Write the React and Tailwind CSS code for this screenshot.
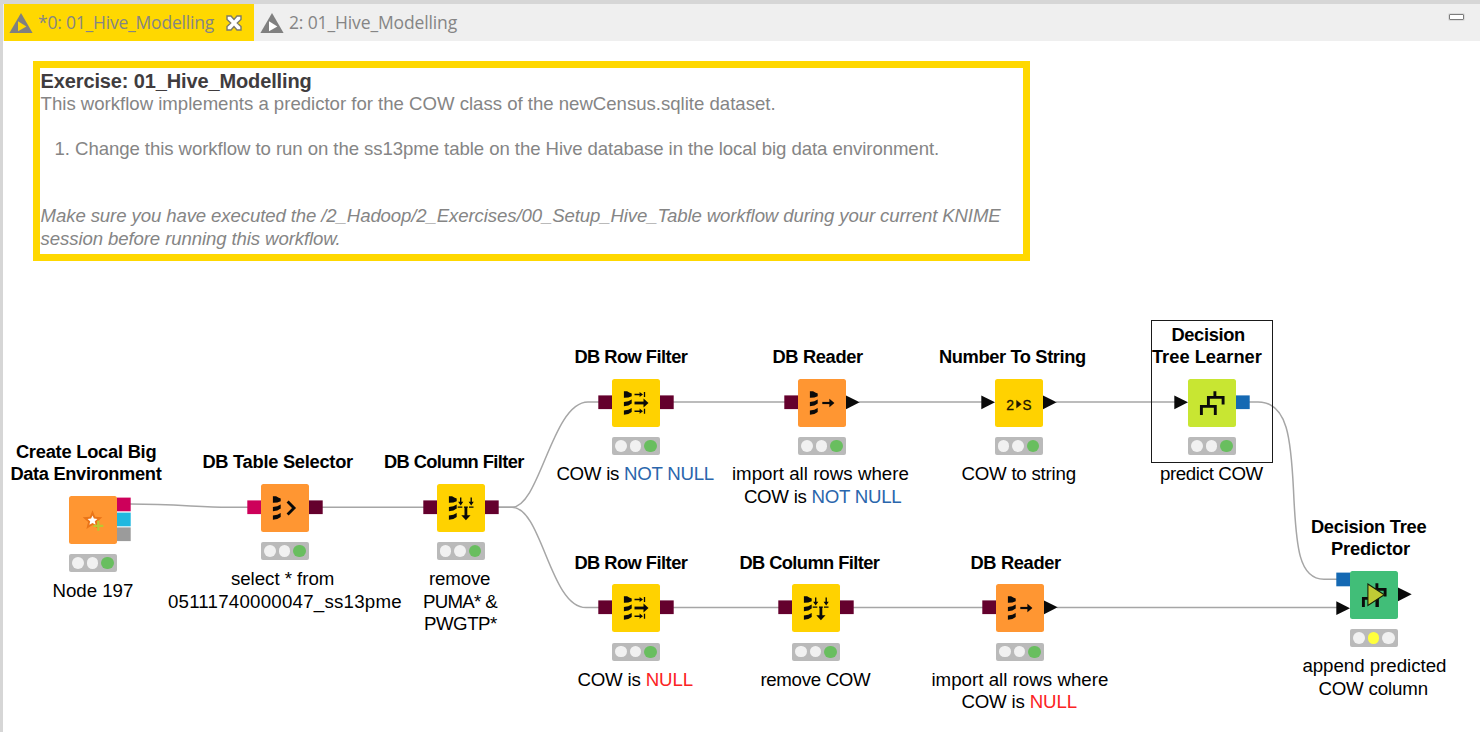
import React, { useLayoutEffect, useRef, useState } from "react";

// One line of text whose tracking is adjusted so that it spans `width` pixels.
function FitText({ width, className = "", children }) {
  const ref = useRef(null);
  const [spacing, setSpacing] = useState(0);
  useLayoutEffect(() => {
    const el = ref.current;
    el.style.letterSpacing = "0px";
    const natural = el.getBoundingClientRect().width;
    const next = (width - natural) / el.textContent.length;
    el.style.letterSpacing = next + "px";
    setSpacing(next);
  }, [width]);
  return (
    <span ref={ref} className={"inline-block whitespace-pre " + className} style={{ letterSpacing: spacing + "px" }}>
      {children}
    </span>
  );
}

// Lines are [x1, x2, text, highlighted text, highlight colour class].
function Label({ lines, top, bold }) {
  const left = Math.min(...lines.map((l) => l[0]));
  return (
    <div className="absolute flex flex-col items-start" style={{ left: left - 0.6, top }}>
      {lines.map(([x1, x2, text, mark, color], i) => (
        <div
          key={i}
          className={"h-[22.4px] leading-[22.4px] text-black " + (bold ? "text-[18.3px] font-bold" : "text-[18.7px]")}
          style={{ marginLeft: x1 - left }}
        >
          <FitText width={x2 - x1 + 1}>
            {text}
            {mark && <span className={color}>{mark}</span>}
          </FitText>
        </div>
      ))}
    </div>
  );
}

const Stack = () => (
  <g fill="#0a0a0a">
    <path d="M11.9 12.2h3.2q2 1.5 4.6 2.2v2.8q-3.200 1.700-7.800 1.600z" />
    <path d="M11.900 22.900q5-.4 7.800-2.500v4.200q-2.800 2.500-7.800 2.600z" />
    <path d="M11.900 31.400q5-.4 7.800-2.500v4.200q-2.800 2.500-7.800 2.600z" />
  </g>
);

const Tree = () => (
  <path d="M26.9 12.3V18.4M20.4 28.5V18.4H35.1V25.6M13.4 36V27.4H27.3V36" fill="none" stroke="#0a0a0a" strokeWidth="2.900" />
);

const icons = {
  star: (
    <g>
      <path d="M23.5 14.2l2.6 6.5 7.2.5-5.4 4.7 1.7 7-6.1-3.8-6.100 3.800 1.700-7-5.400-4.700 7.200-.5z" fill="#ea7519" />
      <path d="M23.500 19.400l1.400 3.200 3.500.4-2.600 2.300.8 3.500-3.100-1.800-3.100 1.800.8-3.500-2.600-2.300 3.500-.4z" fill="#fff" />
      <path d="M24.3 29.8H34.3M29.3 24.8V34.8" stroke="#bcc832" strokeWidth="2.2" />
    </g>
  ),
  selector: (
    <g>
      <Stack />
      <path d="M26.6 17.6L33 24.1L26.6 30.6" fill="none" stroke="#0a0a0a" strokeWidth="2.900" />
    </g>
  ),
  row: (
    <g>
      <Stack />
      <g stroke="#0a0a0a" fill="#0a0a0a">
        <path d="M22.500 15.500H29M22.500 32.200H29" strokeWidth="1.400" />
        <path d="M27.600 12.900l3.400 2.600-3.400 2.600zM27.600 29.600l3.400 2.600-3.400 2.600z" stroke="none" />
        <path d="M32.500 13V18M32.500 29.700V34.700" strokeWidth="1.300" />
        <path d="M22.500 24H33" strokeWidth="2.800" />
        <path d="M31.500 19.400l5 4.600-5 4.600z" stroke="none" />
      </g>
    </g>
  ),
  column: (
    <g>
      <Stack />
      <g stroke="#0a0a0a" fill="#0a0a0a">
        <path d="M23.700 13.500V19M34.200 13.500V19" strokeWidth="1.400" />
        <path d="M21.100 17.800l2.600 3.600 2.600-3.600zM31.600 17.800l2.600 3.600 2.600-3.600z" stroke="none" />
        <path d="M20.700 23.200H25.300M27 23.200H30.800M32 23.200H36.500" strokeWidth="1.200" />
        <path d="M28.900 23V33" strokeWidth="2.800" />
        <path d="M24.300 31.300l4.600 5 4.600-5z" stroke="none" />
      </g>
    </g>
  ),
  reader: (
    <g>
      <Stack />
      <path d="M24.300 24H33" stroke="#0a0a0a" strokeWidth="2.200" />
      <path d="M31.400 19.700l5 4.300-5 4.300z" fill="#0a0a0a" />
    </g>
  ),
  string: (
    <g fill="#1c1600" fontFamily="Liberation Sans, sans-serif" fontSize="15" stroke="#1c1600" strokeWidth=".3">
      <text x="11.200" y="30.600" textLength="7.800" lengthAdjust="spacingAndGlyphs">2</text>
      <path d="M21.500 21.300L26.400 25.200L21.500 29.100z" />
      <text x="27.500" y="30.600" textLength="9" lengthAdjust="spacingAndGlyphs">S</text>
    </g>
  ),
  tree: <Tree />,
  predictor: (
    <g>
      <Tree />
      <path d="M27 27V36" stroke="#0a0a0a" strokeWidth="2.900" />
      <path d="M17.900 13L34.300 23.800L17.900 34.400z" fill="#bfcb35" stroke="#14200a" strokeWidth="1.100" />
    </g>
  ),
};

const M = "#64002d";
const P = "#cd005a";
const B = "#1569b3";
const BLUE = "text-[#2a66ac]";
const RED = "text-[#fb2323]";

// Ports are [side, offset from the body's top, colour]; without a colour they are data triangles.
const nodes = [
  {
    x: 69, y: 495.7, bg: "bg-[#ff9632]", icon: "star",
    ports: [["r", 1.6, P], ["r", 16.6, "#1fb8e0"], ["r", 31.4, "#9b9b9b"]],
    title: [[16.5, 156, "Create Local Big"], [11, 161, "Data Environment"]],
    note: [[53, 133, "Node 197"]],
  },
  {
    x: 261, y: 483.7, bg: "bg-[#ff9632]", icon: "selector",
    ports: [["l", 16.4, P], ["r", 16.4, M]],
    title: [[203, 352.5, "DB Table Selector"]],
    note: [[231.5, 334, "select * from"], [168.5, 401.5, "05111740000047_ss13pme"]],
  },
  {
    x: 436.5, y: 483.7, bg: "bg-[#ffd200]", icon: "column",
    ports: [["l", 16.4, M], ["r", 16.4, M]],
    title: [[384.5, 523.5, "DB Column Filter"]],
    note: [[429.5, 490, "remove"], [423.5, 496.5, "PUMA* &"], [424.5, 496.5, "PWGTP*"]],
  },
  {
    x: 612, y: 378.7, bg: "bg-[#ffd200]", icon: "row",
    ports: [["l", 16.4, M], ["r", 16.4, M]],
    title: [[575, 687, "DB Row Filter"]],
    note: [[557, 713.5, "COW is ", "NOT NULL", BLUE]],
  },
  {
    x: 798, y: 378.7, bg: "bg-[#ff9632]", icon: "reader",
    ports: [["l", 16.4, M], ["r", 16.4]],
    title: [[773, 862.5, "DB Reader"]],
    note: [[732.5, 908.5, "import all rows where"], [744.5, 901, "COW is ", "NOT NULL", BLUE]],
  },
  {
    x: 994.5, y: 378.7, bg: "bg-[#ffd200]", icon: "string",
    ports: [["l", 16.4], ["r", 16.4]],
    title: [[939.5, 1085.5, "Number To String"]],
    note: [[962, 1075.5, "COW to string"]],
  },
  {
    x: 1188, y: 378.7, bg: "bg-[#c8e632]", icon: "tree",
    ports: [["l", 16.4], ["r", 16.4, B]],
    title: [[1172, 1244.5, "Decision"], [1152.5, 1261.5, "Tree Learner"]],
    note: [[1160.5, 1262.5, "predict COW"]],
  },
  {
    x: 612, y: 584.3, bg: "bg-[#ffd200]", icon: "row",
    ports: [["l", 16.4, M], ["r", 16.4, M]],
    title: [[575, 687, "DB Row Filter"]],
    note: [[578, 692.5, "COW is ", "NULL", RED]],
  },
  {
    x: 792, y: 584.3, bg: "bg-[#ffd200]", icon: "column",
    ports: [["l", 16.4, M], ["r", 16.4, M]],
    title: [[740, 879, "DB Column Filter"]],
    note: [[761, 870, "remove COW"]],
  },
  {
    x: 996, y: 584.3, bg: "bg-[#ff9632]", icon: "reader",
    ports: [["l", 16.4, M], ["r", 16.4]],
    title: [[971, 1060.5, "DB Reader"]],
    note: [[932, 1108, "import all rows where"], [962, 1076.5, "COW is ", "NULL", RED]],
  },
  {
    x: 1350, y: 570.7, bg: "bg-[#41be78]", icon: "predictor", state: "configured",
    ports: [["l", 1.6, B], ["l", 30.3], ["r", 16.4]],
    title: [[1311.5, 1426, "Decision Tree"], [1331.5, 1409.5, "Predictor"]],
    note: [[1303, 1446, "append predicted"], [1319, 1427.5, "COW column"]],
  },
];

function Node({ node }) {
  const { x, y, bg, icon, ports, title, note, state } = node;
  return (
    <>
      <Label lines={title} bold top={y - 10 - title.length * 22.4} />
      <div className="absolute flex w-12 flex-col gap-[10.5px]" style={{ left: x, top: y }}>
        <div className={"h-12 w-12 rounded-[2.5px] " + bg}>
          <svg viewBox="0 0 48 48" className="block h-12 w-12 overflow-visible">
            {icons[icon]}
            {ports.map(([side, off, color], i) => {
              const px = side === "l" ? -13.7 : 48;
              return color ? (
                <rect key={i} x={px} y={off} width="13.7" height="13.7" fill={color} />
              ) : (
                <path key={i} d={`M${px} ${off}l13.7 6.9l-13.7 6.9z`} fill="#0a0a0a" />
              );
            })}
          </svg>
        </div>
        <div className="flex h-[18px] w-12 items-center justify-center gap-[3.3px] rounded-[2px] bg-[#bababa]">
          <div className="h-[11.4px] w-[11.4px] rounded-full bg-[#f1f1f1]" />
          <div className={"h-[11.4px] w-[11.4px] rounded-full " + (state ? "bg-[#ffff3c]" : "bg-[#f1f1f1]")} />
          <div className={"h-[12.4px] w-[12.4px] rounded-full " + (state ? "bg-[#f1f1f1]" : "bg-[#69be5f]")} />
        </div>
      </div>
      <Label lines={note} top={y + 84.6} />
    </>
  );
}

function WorkflowIcon({ hole }) {
  return (
    <svg viewBox="0 0 24 20" className="h-5 w-6 shrink-0">
      <path d="M12 0L23.6 20H0.4z" fill="#808080" />
      <path d="M9 8.200L17.400 13.600L9 18.200z" fill={hole} />
    </svg>
  );
}

export default function App() {
  return (
    <div className="flex h-[732px] w-[1480px] flex-col overflow-hidden border-l-[3px] border-t-4 border-[#d6d6d6] bg-white font-['Liberation_Sans',Arial,sans-serif]">
      <header className="flex h-[37px] shrink-0 bg-[#efefef] font-['Open_Sans','Noto_Sans',sans-serif] text-[17.5px] leading-[37px] text-[#858585]">
        <div className="ml-px flex h-[37px] w-[250px] items-center bg-[#ffd800] pl-[5px]">
          <WorkflowIcon hole="#ffd800" />
          <div className="ml-[5px] w-[188px]">
            <FitText width={176}>*0: 01_Hive_Modelling</FitText>
          </div>
          <svg viewBox="0 0 16 16" className="h-4 w-4 shrink-0">
            <path d="M1 1H5L8 4.5L11 1H15V4.5L11.3 8L15 11.5V15H11L8 11.5L5 15H1V11.5L4.7 8L1 4.5z" fill="#fff" stroke="#7d7a68" strokeWidth="1.400" />
          </svg>
        </div>
        <div className="ml-[6px] flex flex-1 items-center">
          <WorkflowIcon hole="#ffffff" />
          <div className="ml-[5px]">
            <FitText width={168}>2: 01_Hive_Modelling</FitText>
          </div>
        </div>
        <div className="mr-4 mt-[10px] h-[6px] w-[15px] rounded-[1px] border-[1.5px] border-[#7c7c7c] bg-white shadow-[0_0_0_1px_#dcdcdc]" />
      </header>
      <main className="relative flex-1">
        {/* The canvas origin coincides with the window's, so node coordinates are window coordinates. */}
        <div className="absolute -left-[3px] -top-[41px] h-[732px] w-[1480px]">
          <svg viewBox="0 0 1480 732" className="absolute inset-0 h-[732px] w-[1480px]" fill="none" stroke="#a6a6a6" strokeWidth="1.5">
            <path d="M130 504C175 504 200 507.2 228 507.2H248" />
            <path d="M322 507.2H424" />
            <path d="M498 507.2H512C540 507.2 552 402 588 402H600" />
            <path d="M498 507.2H512C542 507.2 550 607.6 586 607.6H600" />
            <path d="M673 402H785M859 402H982M1056 402H1175" />
            <path d="M673 607.6H779M853 607.6H983M1057 607.6H1338" />
            <path d="M1249 402H1258C1288 402 1291 440 1293.5 490C1296 548 1299 579.2 1324 579.2H1338" />
          </svg>
          <section className="absolute left-[33px] top-[60.5px] h-[200.5px] w-[997px] border-[7px] border-[#ffd800] pl-[0.6px] text-[18.6px] leading-[22.5px] text-[#858585]">
            <h1 className="mt-[2px] h-[23px] text-[20px] font-bold leading-[23px] text-[#403c3e]">
              <FitText width={271}>Exercise: 01_Hive_Modelling</FitText>
            </h1>
            <p className="h-[45px]">
              <FitText width={735}>This workflow implements a predictor for the COW class of the newCensus.sqlite dataset.</FitText>
            </p>
            <p className="h-[67.5px] pl-[14px]">
              <FitText width={884.5}>1. Change this workflow to run on the ss13pme table on the Hive database in the local big data environment.</FitText>
            </p>
            <p className="italic">
              <FitText width={960}>Make sure you have executed the /2_Hadoop/2_Exercises/00_Setup_Hive_Table workflow during your current KNIME</FitText>
              <br />
              <FitText width={300}>session before running this workflow.</FitText>
            </p>
          </section>
          {nodes.map((n, i) => (
            <Node key={i} node={n} />
          ))}
          <div className="absolute left-[1151px] top-[320px] h-[143px] w-[122px] border-[1.5px] border-[#1a1a1a]" />
        </div>
      </main>
    </div>
  );
}
